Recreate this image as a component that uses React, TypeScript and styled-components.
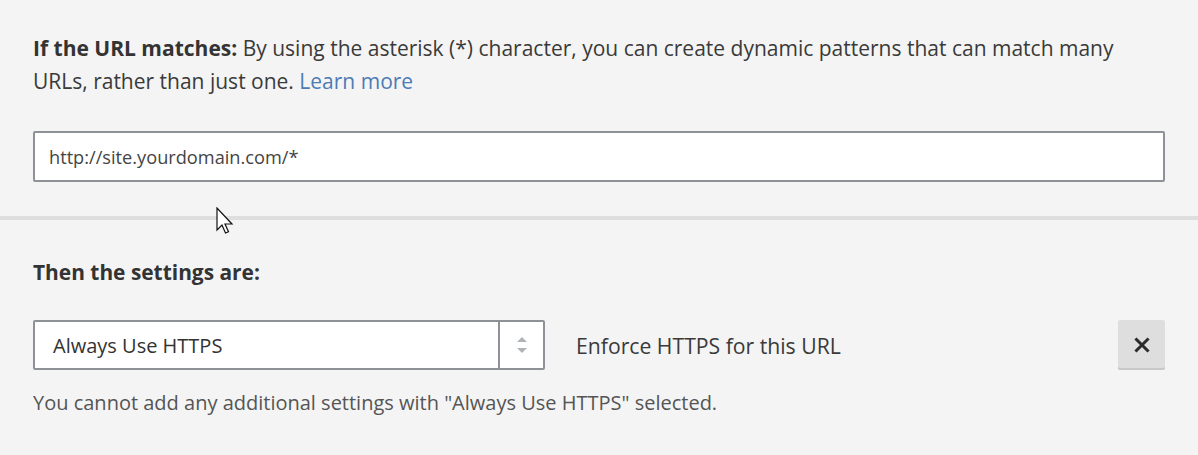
import React from 'react'
import styled, { createGlobalStyle } from 'styled-components'

const Global = createGlobalStyle`
  html, body {
    margin: 0;
    padding: 0;
    background: #f4f4f4;
  }
  body {
    font-family: "Open Sans", "Noto Sans", sans-serif;
    color: #333;
  }
`

const Arrow = () => (
  <svg width="20" height="30" viewBox="0 0 20 30">
    <path
      d="M1 1 L1 23 L6 18 L9.5 26 L12.5 24.7 L9 17 L16 17 Z"
      fill="#fff"
      stroke="#111"
      strokeWidth="1.2"
      strokeLinejoin="miter"
    />
  </svg>
)

const Cross = () => (
  <svg width="16" height="16" viewBox="0 0 16 16">
    <path d="M2.5 2.5 L13.5 13.5 M13.5 2.5 L2.5 13.5" stroke="#2b2b2b" strokeWidth="3" strokeLinecap="square" />
  </svg>
)

const Carets = () => (
  <svg width="12" height="22" viewBox="0 0 12 22">
    <path d="M1 8 L6 3 L11 8 Z" fill="#b0b3b6" />
    <path d="M1 14 L6 19 L11 14 Z" fill="#b0b3b6" />
  </svg>
)

export default function App() {
  return (
    <>
      <Global />
      <S.Page>
        <S.Section>
          <S.Intro>
            <strong>If the URL matches:</strong> By using the asterisk (*) character, you can create dynamic patterns that can match many URLs, rather than just one. <S.Link href="#">Learn more</S.Link>
          </S.Intro>
          <S.UrlInput defaultValue="http://site.yourdomain.com/*" />
        </S.Section>
        <S.Divider>
          <S.Cursor><Arrow /></S.Cursor>
        </S.Divider>
        <S.SettingsSection>
          <S.Heading>Then the settings are:</S.Heading>
          <S.Row>
            <S.Select>
              <S.SelectValue>Always Use HTTPS</S.SelectValue>
              <S.SelectArrows><Carets /></S.SelectArrows>
            </S.Select>
            <S.Description>Enforce HTTPS for this URL</S.Description>
            <S.RemoveButton aria-label="Remove"><Cross /></S.RemoveButton>
          </S.Row>
          <S.Help>You cannot add any additional settings with "Always Use HTTPS" selected.</S.Help>
        </S.SettingsSection>
      </S.Page>
    </>
  )
}

const S = {
  Page: styled.div`
    width: 1198px;
    height: 455px;
    overflow: hidden;
  `,
  Section: styled.div`
    padding: 32px 33px 0 33px;
  `,
  Intro: styled.p`
    margin: 0;
    max-width: 1110px;
    font-size: 21px;
    line-height: 33px;
    color: #3a3a3a;
    strong {
      font-weight: 700;
      color: #333;
    }
  `,
  Link: styled.a`
    color: #4d7cb5;
    text-decoration: none;
  `,
  UrlInput: styled.input`
    display: block;
    box-sizing: border-box;
    margin-top: 33px;
    width: 1132px;
    height: 51px;
    padding: 0 14px;
    border: 2px solid #8e9296;
    border-radius: 2px;
    background: #fff;
    font-family: "Open Sans", "Noto Sans", sans-serif;
    font-size: 18.2px;
    color: #444;
    outline: none;
  `,
  Divider: styled.div`
    position: relative;
    margin-top: 34px;
    height: 4px;
    background: #dedede;
  `,
  Cursor: styled.div`
    position: absolute;
    left: 216px;
    top: -9px;
    line-height: 0;
  `,
  SettingsSection: styled.div`
    padding: 37px 33px 0 33px;
  `,
  Heading: styled.h3`
    margin: 0;
    font-size: 20.9px;
    line-height: 30px;
    font-weight: 700;
    color: #333;
  `,
  Row: styled.div`
    display: flex;
    align-items: center;
    margin-top: 33px;
  `,
  Select: styled.div`
    box-sizing: border-box;
    display: flex;
    width: 512px;
    height: 50px;
    border: 2px solid #8e9296;
    border-radius: 2px;
    background: #fff;
  `,
  SelectValue: styled.div`
    flex: 1;
    display: flex;
    align-items: center;
    padding-left: 18px;
    font-size: 20px;
    color: #333;
  `,
  SelectArrows: styled.div`
    width: 43px;
    border-left: 2px solid #8e9296;
    display: flex;
    align-items: center;
    justify-content: center;
  `,
  Description: styled.div`
    flex: 1;
    margin-left: 31px;
    font-size: 21.2px;
    color: #3a3a3a;
  `,
  RemoveButton: styled.button`
    box-sizing: border-box;
    width: 47px;
    height: 50px;
    border: none;
    border-radius: 2px;
    background: #dedede;
    box-shadow: inset 0 -2px 0 #c8c8c8;
    display: flex;
    align-items: center;
    justify-content: center;
    padding: 0;
    cursor: pointer;
  `,
  Help: styled.p`
    margin: 19px 0 0 0;
    font-size: 20px;
    line-height: 28px;
    color: #555;
  `,
}
